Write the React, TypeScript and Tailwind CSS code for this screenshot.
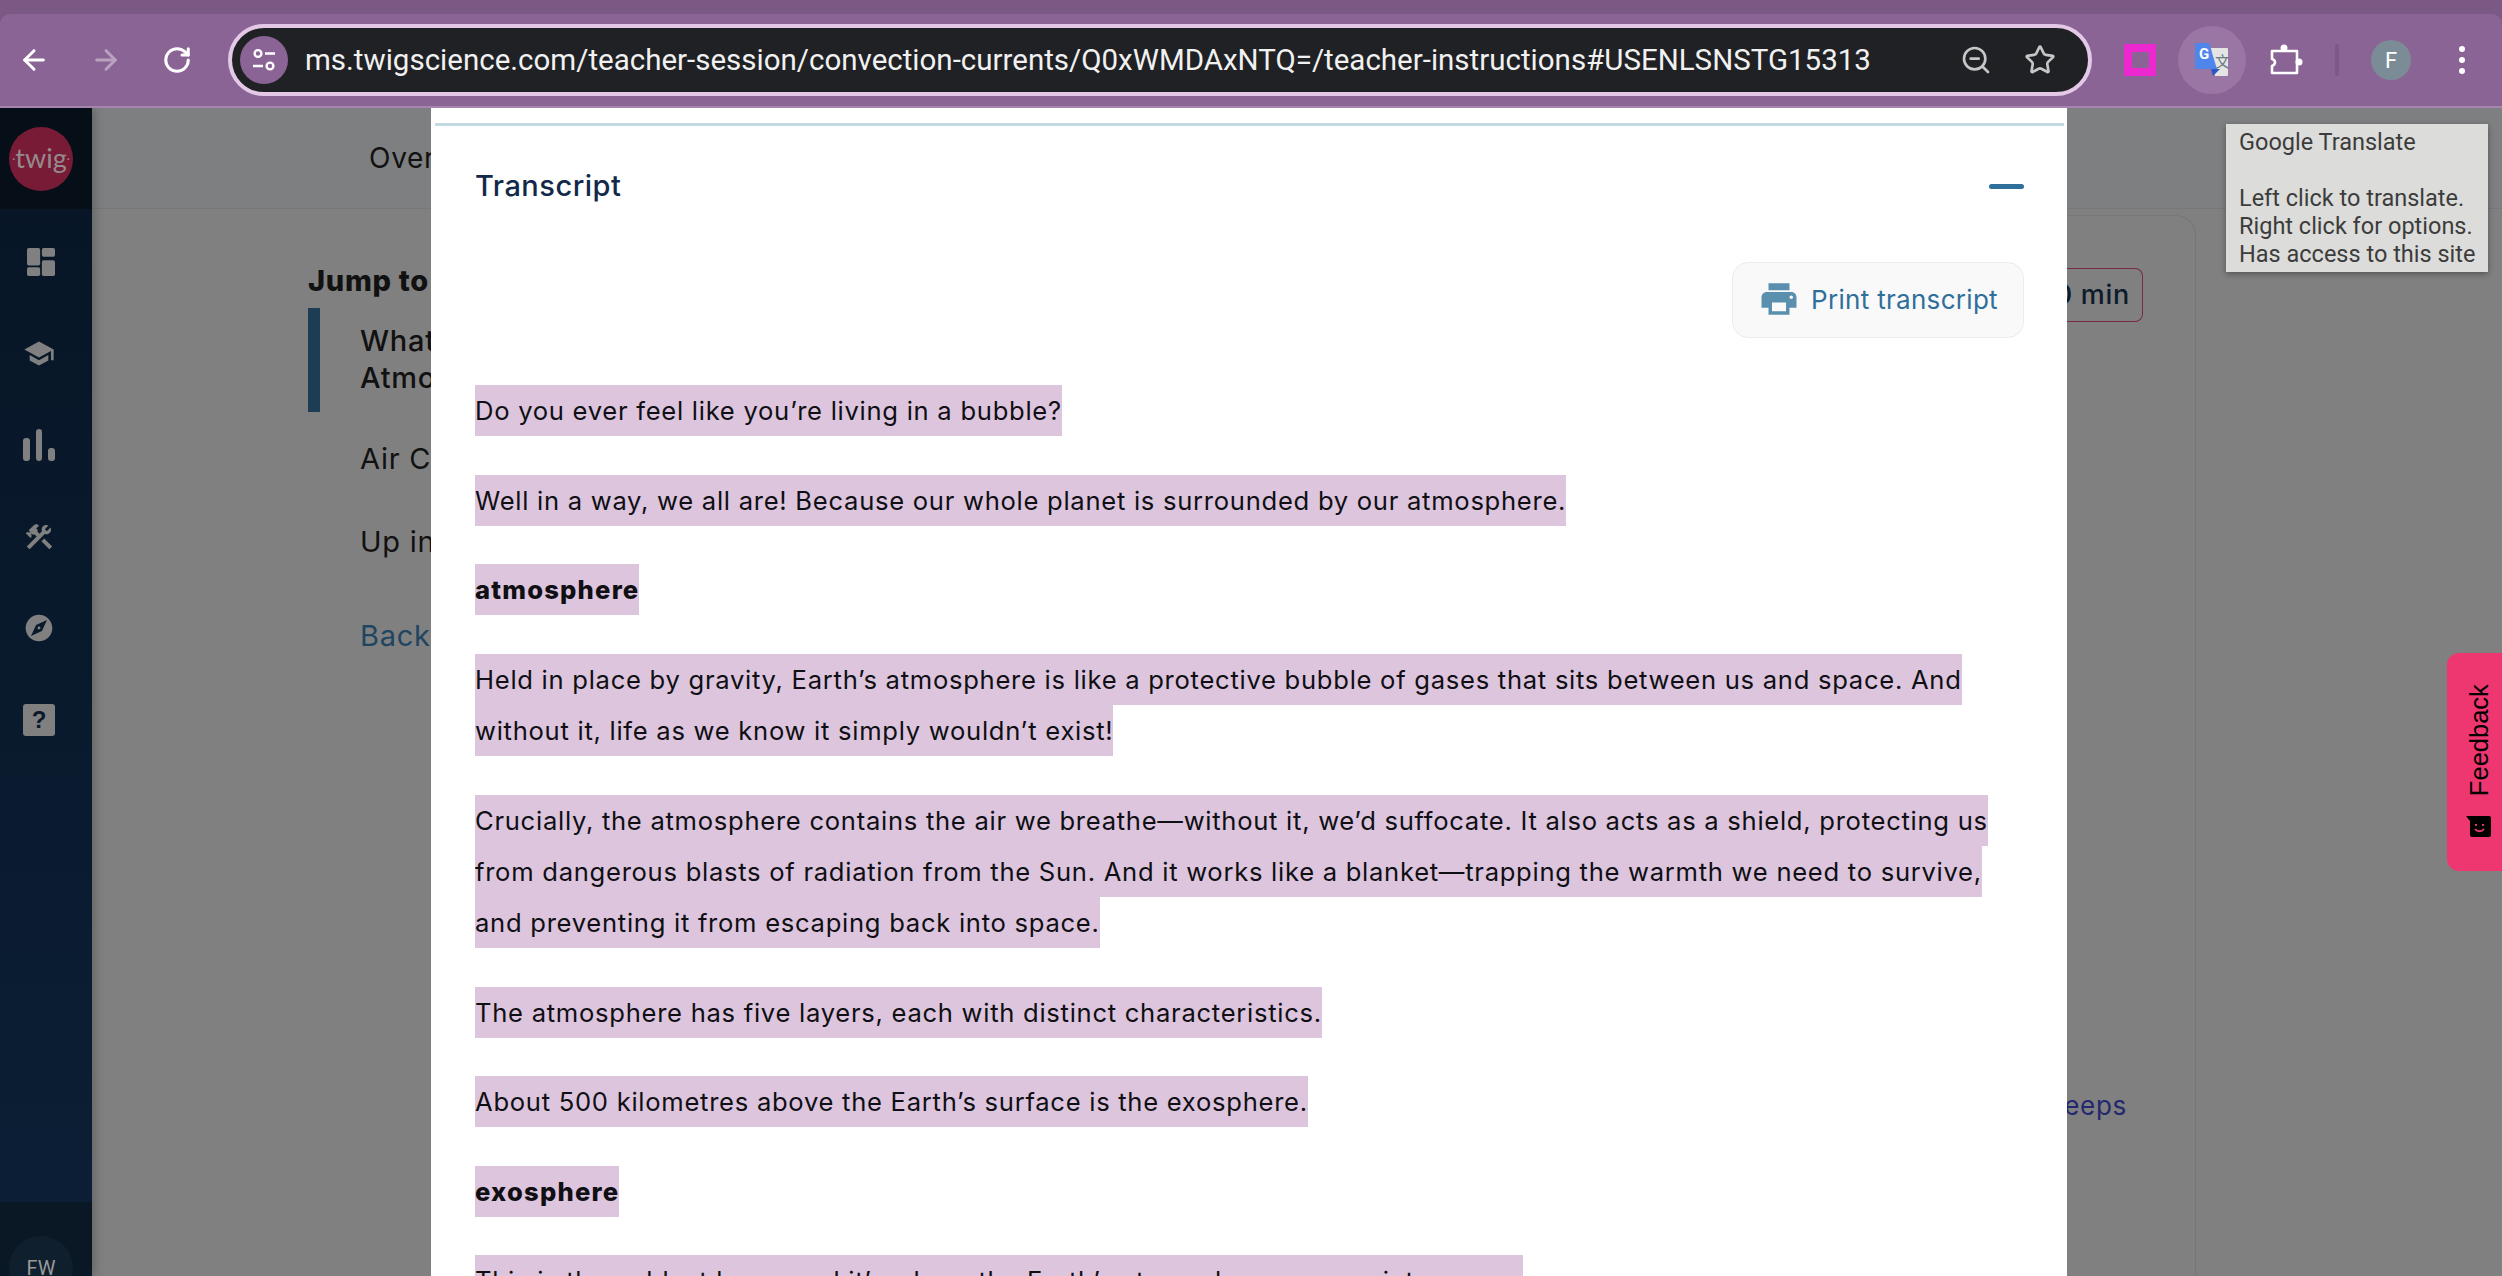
import React from 'react'
import { ArrowLeft, ArrowRight, RotateCw, Star, ZoomOut } from 'lucide-react'
import { MdSchool, MdConstruction, MdExplore, MdPrint } from 'react-icons/md'

const poppins = 'font-["Inter","Liberation_Sans",sans-serif] tracking-[0.72px]'

type Line = { text: string; bold?: boolean }

const paragraphs: Line[][] = [
  [{ text: 'Do you ever feel like you’re living in a bubble?' }],
  [{ text: 'Well in a way, we all are! Because our whole planet is surrounded by our atmosphere.' }],
  [{ text: 'atmosphere', bold: true }],
  [
    { text: 'Held in place by gravity, Earth’s atmosphere is like a protective bubble of gases that sits between us and space. And' },
    { text: 'without it, life as we know it simply wouldn’t exist!' },
  ],
  [
    { text: 'Crucially, the atmosphere contains the air we breathe—without it, we’d suffocate. It also acts as a shield, protecting us' },
    { text: 'from dangerous blasts of radiation from the Sun. And it works like a blanket—trapping the warmth we need to survive,' },
    { text: 'and preventing it from escaping back into space.' },
  ],
  [{ text: 'The atmosphere has five layers, each with distinct characteristics.' }],
  [{ text: 'About 500 kilometres above the Earth’s surface is the exosphere.' }],
  [{ text: 'exosphere', bold: true }],
  [{ text: 'This is the coldest layer, and it’s where the Earth’s atmosphere merges into space.' }],
]

function BrowserBar() {
  return (
    <div className="bg-[#7a5a84] pt-[14px] shrink-0">
      <div className="h-[94px] bg-[#8b6496] border-b-2 border-[#a584ae] rounded-t-[10px] flex items-center text-white font-['Roboto',sans-serif]">
        <div className="flex items-center pl-[18px] gap-[40px] w-[228px]">
          <ArrowLeft size={32} strokeWidth={2.2} />
          <ArrowRight size={32} strokeWidth={2.2} className="opacity-40" />
          <RotateCw size={30} strokeWidth={2.4} />
        </div>
        <div className="w-[1864px] h-[72px] rounded-full border-4 border-[#e3c8e8] bg-[#202124] flex items-center pl-[8px] pr-[32px]">
          <div className="w-[48px] h-[48px] rounded-full bg-[#8b6496] flex items-center justify-center shrink-0">
            <svg width="28" height="28" viewBox="0 0 28 28" fill="none" stroke="white" strokeWidth="2.4">
              <circle cx="8" cy="7.5" r="3.4" />
              <path d="M15 7.5h10M3 20h10" />
              <circle cx="20" cy="20" r="3.4" />
            </svg>
          </div>
          <span className="ml-[17px] text-[29.5px] text-[#f1f1f1] whitespace-nowrap flex-1">
            ms.twigscience.com/teacher-session/convection-currents/Q0xWMDAxNTQ=/teacher-instructions#USENLSNSTG15313
          </span>
          <ZoomOut size={32} strokeWidth={2} className="text-[#c4c7c5] mr-[32px]" />
          <Star size={32} strokeWidth={2} className="text-[#c4c7c5]" />
        </div>
        <div className="flex items-center flex-1 pl-[32px]">
          <div className="w-[32px] h-[32px] bg-[#ee28d0] flex items-center justify-center">
            <div className="w-[17px] h-[16px] bg-[#8b6496]" />
          </div>
          <div className="ml-[22px] w-[68px] h-[68px] rounded-full bg-[#9a76a5] flex items-center justify-center">
            <svg width="34" height="34" viewBox="0 0 34 34">
              <path d="M16 5h16a1 1 0 0 1 1 1v26a1 1 0 0 1-1 1H20z" fill="#e4e4e4" />
              <path d="M1 0h13l8 26H1a1 1 0 0 1-1-1V1a1 1 0 0 1 1-1z" fill="#4f86ec" />
              <path d="M16 26h9l-7 7z" fill="#2a56c6" />
              <text x="20" y="24" fontSize="15" fill="#6a7a80" fontFamily="Noto Sans CJK SC">文</text>
              <text x="4" y="16" fontSize="15" fontWeight="700" fill="white" fontFamily="Roboto">G</text>
            </svg>
          </div>
          <svg width="34" height="34" viewBox="0 0 34 34" fill="none" stroke="white" strokeWidth="2.6" strokeLinejoin="round" className="ml-[23px]">
            <path d="M3 8h25v22H3v-7c4-1.500 4-6 0-7z" />
            <circle cx="15" cy="5" r="3.500" fill="white" stroke="none" />
            <circle cx="30" cy="19" r="3.500" fill="white" stroke="none" />
          </svg>
          <div className="ml-[32px] w-[4px] h-[32px] rounded bg-[#7b5a86]" />
          <div className="ml-[32px] w-[40px] h-[40px] rounded-full bg-[#7b8c97] flex items-center justify-center text-[22px]">
            F
          </div>
          <div className="ml-[48px] flex flex-col gap-[5px]">
            <div className="w-[6px] h-[6px] rounded-full bg-white" />
            <div className="w-[6px] h-[6px] rounded-full bg-white" />
            <div className="w-[6px] h-[6px] rounded-full bg-white" />
          </div>
        </div>
      </div>
    </div>
  )
}

function NavIcon({ children }: { children: React.ReactNode }) {
  return <div className="w-[32px] h-[32px] flex items-center justify-center">{children}</div>
}

function Sidebar() {
  return (
    <div className="w-[92px] shrink-0 h-full flex flex-col bg-gradient-to-b from-[#071525] to-[#0c1f36] text-[#808080] shadow-[4px_0_8px_rgba(0,0,0,0.18)] z-10">
      <div className="h-[101px] bg-[#060f17] flex items-center pl-[9px] shrink-0">
        <div className="w-[64px] h-[64px] rounded-full bg-[#771b37] flex items-center justify-center text-[#958a8d] text-[27px] font-['Lato',sans-serif]">
          <span className="text-[12px]">·</span>twig<span className="text-[12px]">·</span>
        </div>
      </div>
      <div className="flex flex-col items-start pl-[23px] pt-[37px] gap-[59.5px] flex-1">
        <NavIcon>
          <svg width="32" height="32" viewBox="0 0 32 32" fill="#808080" className="ml-[4px]">
            <rect x="0" y="0" width="15" height="20" rx="2" />
            <rect x="0" y="22" width="15" height="10" rx="2" />
            <rect x="17" y="0" width="15" height="10" rx="2" />
            <rect x="17" y="14" width="15" height="18" rx="2" />
          </svg>
        </NavIcon>
        <NavIcon>
          <MdSchool size={35} />
        </NavIcon>
        <div className="w-[32px] h-[32px] flex items-end gap-[6px]">
          <div className="w-[7px] h-[23px] rounded-[3px] bg-[#808080]" />
          <div className="w-[7px] h-[32px] rounded-[3px] bg-[#808080]" />
          <div className="w-[7px] h-[13px] rounded-[3px] bg-[#808080]" />
        </div>
        <NavIcon>
          <MdConstruction size={38} />
        </NavIcon>
        <NavIcon>
          <MdExplore size={38} />
        </NavIcon>
        <div className="w-[32px] h-[32px] rounded-[3px] bg-[#808080] text-[#0a1a2c] font-semibold text-[24px] flex items-center justify-center font-['Liberation_Sans',sans-serif]">
          ?
        </div>
      </div>
      <div className="h-[74px] border-t border-[#0a1926] bg-[#0a1826] pl-[9px] pt-[33px] shrink-0 overflow-hidden">
        <div className="w-[64px] h-[64px] rounded-full bg-[#101f2e] text-[#999] text-[20px] flex justify-center pt-[17px] font-['Roboto',sans-serif]">
          FW
        </div>
      </div>
    </div>
  )
}

function PageBehind() {
  return (
    <div className={`flex-1 bg-[#808080] text-[#111] ${poppins}`}>
      <div className="h-[101px] bg-[#7e7f80] border-b border-[#73797c] flex items-center pl-[277px] text-[28px]">
        Overview
      </div>
      <div className="flex">
        <div className="ml-[216px] w-[560px] pt-[53px] text-[29px]">
          <div className="font-extrabold leading-[38px]">Jump to</div>
          <div className="mt-[8px] border-l-[12px] border-[#1d3d54] pl-[40px] font-medium leading-[37px] h-[104px] pt-[14px]">
            What is the
            <br />
            Atmosphere?
          </div>
          <div className="mt-[28px] ml-[52px] leading-[38px]">Air Circulation</div>
          <div className="mt-[45px] ml-[52px] leading-[38px]">Up in the air</div>
          <div className="mt-[56px] ml-[52px] leading-[38px] text-[#1f4560]">Back to top</div>
        </div>
        <div className="ml-[1028px] mt-[6px] w-[0px] flex-1 h-[1100px] mr-[306px] border-r border-t border-[#767676] rounded-tr-[20px] flex flex-col items-end pr-[52px] pt-[52px]">
          <div className="h-[54px] w-[80px] border border-l-0 border-[#7b2a44] rounded-r-[8px] flex items-center justify-end pr-[12px] text-[#0d1b2a] text-[27px] font-medium whitespace-nowrap">
            30 min
          </div>
          <div className="mt-[765px] mr-[16px] text-[26px] text-[#23286e] leading-[38px]">eeps</div>
        </div>
      </div>
    </div>
  )
}

function TranscriptModal() {
  return (
    <div className={`absolute left-[431px] top-0 w-[1636px] h-full bg-white overflow-hidden ${poppins}`}>
      <div className="mt-[15px] ml-[4px] mr-[3px] h-[3px] bg-[#c3d9e2]" />
      <div className="pl-[44px] pr-[43px]">
        <div className="flex items-center justify-between h-[120px]">
          <span className="text-[29px] font-medium text-[#12294a] tracking-[0.5px]">Transcript</span>
          <div className="w-[35px] h-[5px] rounded-full bg-[#2f6f9c]" />
        </div>
        <div className="flex justify-end mt-[16px]">
          <button className="w-[292px] h-[76px] pb-[2px] bg-[#f9f9f9] border border-[#ececec] rounded-[16px] flex items-center justify-center gap-[11px] text-[26px] tracking-[0.3px] text-[#2f6f9c]">
            <MdPrint size={42} className="text-[#5a8fae]" />
            Print transcript
          </button>
        </div>
        <div className="mt-[47px] flex flex-col gap-[38.4px] text-[25.6px] leading-[51.2px] text-[#0f0f14]">
          {paragraphs.map((lines, i) => (
            <div key={i}>
              {lines.map((line) => (
                <div
                  key={line.text}
                  className={`w-fit whitespace-nowrap bg-[#dcc5dd] ${line.bold ? 'font-extrabold tracking-[1.2px]' : ''}`}
                >
                  {line.text}
                </div>
              ))}
            </div>
          ))}
        </div>
      </div>
    </div>
  )
}

export default function App() {
  return (
    <div className="h-screen flex flex-col overflow-hidden">
      <BrowserBar />
      <div className="relative flex-1 flex overflow-hidden">
        <Sidebar />
        <PageBehind />
        <TranscriptModal />

        <div className="absolute left-[2226px] top-[16px] w-[262px] h-[148px] bg-[#dcdcda] shadow-[0_2px_6px_rgba(0,0,0,0.35)] pl-[13px] pt-[4px] text-[23.5px] leading-[28px] text-[#3c3c3c] font-['Roboto',sans-serif] whitespace-nowrap z-20">
          Google Translate
          <br />
          <br />
          Left click to translate.
          <br />
          Right click for options.
          <br />
          Has access to this site
        </div>

        <div className="absolute right-0 top-[545px] w-[55px] h-[218px] bg-[#ee3670] rounded-l-[12px] flex flex-col items-center pl-[8px] z-20">
          <div className="mt-[32px] h-[111px] flex items-center justify-center">
            <span className="-rotate-90 text-[25.5px] text-black font-['Liberation_Sans',sans-serif] whitespace-nowrap">
              Feedback
            </span>
          </div>
          <svg width="25" height="22" viewBox="0 0 25 22" className="mt-[19px]">
            <path d="M0 1h23a2 2 0 0 1 2 2v17a2 2 0 0 1-2 2H6a2 2 0 0 1-2-2V6z" fill="black" />
            <path d="M10 9v2M17 9v2M9 14c2 3 7 3 9 0" stroke="#ee3670" strokeWidth="1.800" fill="none" />
          </svg>
        </div>
      </div>
    </div>
  )
}
